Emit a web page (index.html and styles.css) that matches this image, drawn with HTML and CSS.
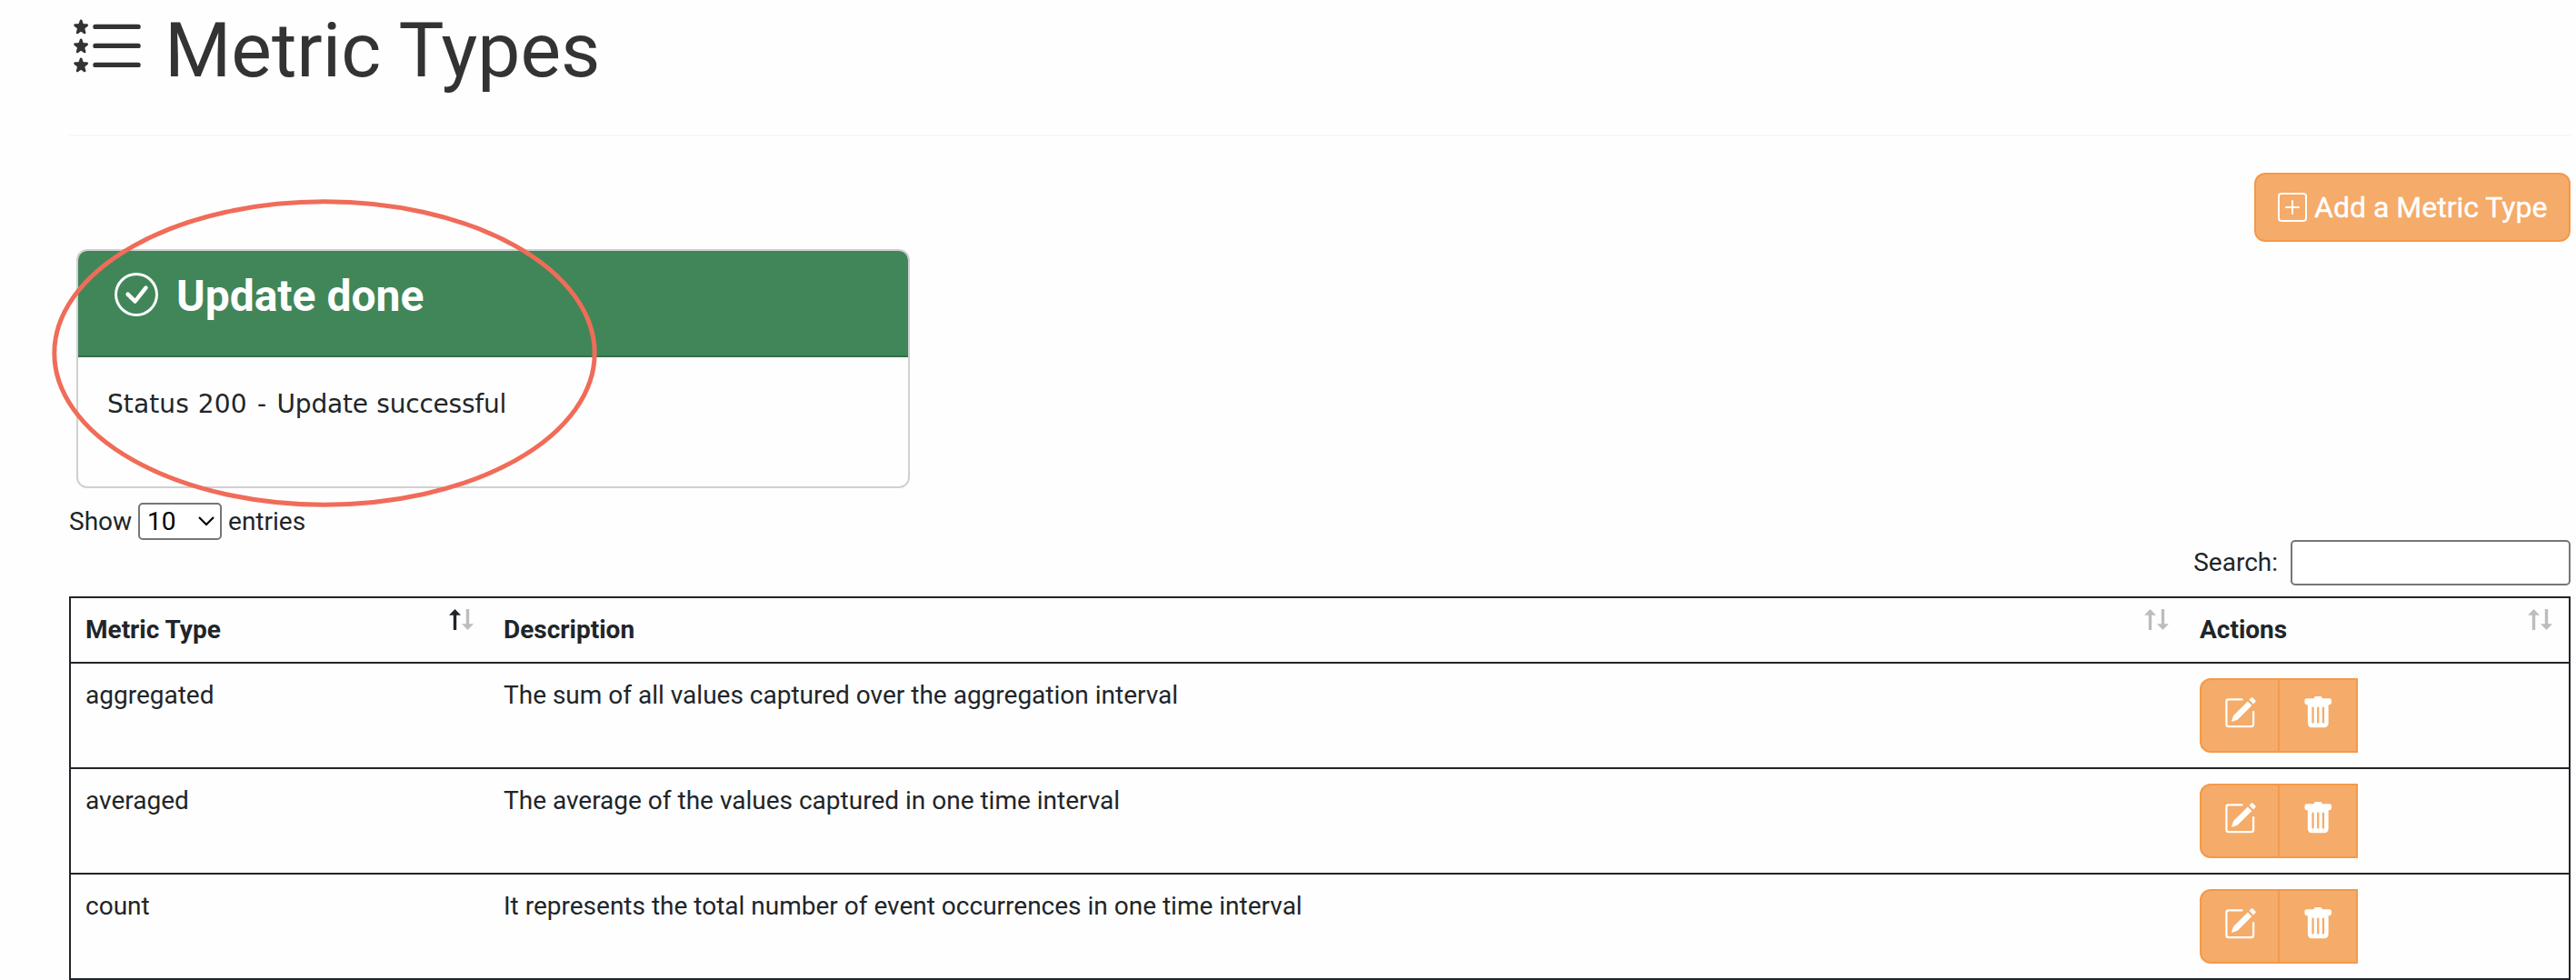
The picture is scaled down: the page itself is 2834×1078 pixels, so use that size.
FILE: index.html
```html
<!DOCTYPE html>
<html lang="en">
<head>
<meta charset="utf-8">
<title>Metric Types</title>
<link rel="stylesheet" href="styles.css">
</head>
<body>
<svg class="sprite" aria-hidden="true">
  <symbol id="edit" viewBox="0 0 16 16">
    <path d="M15.502 1.94a.5.5 0 0 1 0 .706L14.459 3.69l-2-2L13.502.646a.5.5 0 0 1 .707 0l1.293 1.293zm-1.75 2.456-2-2L4.939 9.21a.5.5 0 0 0-.121.196l-.805 2.414a.25.25 0 0 0 .316.316l2.414-.805a.5.5 0 0 0 .196-.12z"/>
    <path fill-rule="evenodd" d="M1 13.5A1.5 1.5 0 0 0 2.5 15h11a1.5 1.5 0 0 0 1.5-1.5v-6a.5.5 0 0 0-1 0v6a.5.5 0 0 1-.5.5h-11a.5.5 0 0 1-.5-.5v-11a.5.5 0 0 1 .5-.5H9a.5.5 0 0 0 0-1H2.5A1.5 1.5 0 0 0 1 2.5z"/>
  </symbol>
  <symbol id="trash" viewBox="0 0 16 16">
    <path d="M2.5 1a1 1 0 0 0-1 1v1a1 1 0 0 0 1 1H3v9a2 2 0 0 0 2 2h6a2 2 0 0 0 2-2V4h.5a1 1 0 0 0 1-1V2a1 1 0 0 0-1-1H10a1 1 0 0 0-1-1H7a1 1 0 0 0-1 1zm3 4a.5.5 0 0 1 .5.5v7a.5.5 0 0 1-1 0v-7a.5.5 0 0 1 .5-.5M8 5a.5.5 0 0 1 .5.5v7a.5.5 0 0 1-1 0v-7A.5.5 0 0 1 8 5m3 .5v7a.5.5 0 0 1-1 0v-7a.5.5 0 0 1 1 0"/>
  </symbol>
  <symbol id="star" viewBox="0 0 16 16">
    <path d="M2.242 2.194a.27.27 0 0 1 .516 0l.162.53c.035.115.14.194.258.194h.551c.259 0 .37.333.164.493l-.468.363a.28.28 0 0 0-.094.3l.173.569c.078.256-.213.462-.423.3l-.417-.324a.27.27 0 0 0-.328 0l-.417.323c-.21.163-.5-.043-.423-.299l.173-.57a.28.28 0 0 0-.094-.299l-.468-.363c-.206-.16-.095-.493.164-.493h.55a.27.27 0 0 0 .259-.194z"/>
  </symbol>
  <symbol id="sort" viewBox="0 0 27 23">
    <path class="sort-up" d="M6.5 0 13 6.7H8.2V23H4.8V6.7H0z"/>
    <path class="sort-down" d="M18.8 0H22.2V16.3H27L20.5 23 14 16.3H18.8z"/>
  </symbol>
</svg>

<main class="page">
  <header class="page-header">
    <svg class="list-icon" viewBox="0 0 16 16">
      <path d="M5 11.5a.5.5 0 0 1 .5-.5h9a.5.5 0 0 1 0 1h-9a.5.5 0 0 1-.5-.5m0-4a.5.5 0 0 1 .5-.5h9a.5.5 0 0 1 0 1h-9a.5.5 0 0 1-.5-.5m0-4a.5.5 0 0 1 .5-.5h9a.5.5 0 0 1 0 1h-9a.5.5 0 0 1-.5-.5"/>
      <use href="#star" width="16" height="16"/>
      <use href="#star" y="4" width="16" height="16"/>
      <use href="#star" y="8" width="16" height="16"/>
    </svg>
    <h1 class="title">Metric Types</h1>
  </header>

  <div class="top-row">
    <section class="card">
      <div class="card-header">
        <svg class="check-icon" viewBox="0 0 16 16">
          <path d="M8 15A7 7 0 1 1 8 1a7 7 0 0 1 0 14m0 1A8 8 0 1 0 8 0a8 8 0 0 0 0 16"/>
          <path d="M10.97 4.97l-.02.022-3.473 4.425-2.093-2.094a.75.75 0 0 0-1.06 1.06L6.97 11.03a.75.75 0 0 0 1.079-.02l3.992-4.99a.75.75 0 0 0-1.071-1.05"/>
        </svg>
        <h2 class="card-title">Update done</h2>
      </div>
      <p class="card-body">Status 200 <span class="dash">-</span> <span class="message">Update successful</span></p>
      <svg class="highlight" viewBox="0 0 600 339">
        <ellipse cx="300" cy="169.5" rx="297.2" ry="166.7"/>
      </svg>
    </section>
    <button class="add-button">
      <svg class="plus-icon" viewBox="0 0 16 16">
        <path d="M14 1a1 1 0 0 1 1 1v12a1 1 0 0 1-1 1H2a1 1 0 0 1-1-1V2a1 1 0 0 1 1-1zM2 0a2 2 0 0 0-2 2v12a2 2 0 0 0 2 2h12a2 2 0 0 0 2-2V2a2 2 0 0 0-2-2z"/>
        <path d="M8 4a.5.5 0 0 1 .5.5v3h3a.5.5 0 0 1 0 1h-3v3a.5.5 0 0 1-1 0v-3h-3a.5.5 0 0 1 0-1h3v-3A.5.5 0 0 1 8 4"/>
      </svg>
      <span>Add a Metric Type</span>
    </button>
  </div>

  <div class="length-row">
    <span>Show</span>
    <div class="length-select">
      <span>10</span>
      <svg class="chevron" viewBox="0 0 18 11"><path d="M1 1l8 8 8-8"/></svg>
    </div>
    <span>entries</span>
  </div>

  <div class="search-row">
    <label for="search">Search:</label>
    <input class="search-input" id="search" type="text">
  </div>

  <table class="metrics">
    <colgroup><col class="col-type"><col class="col-desc"><col class="col-actions"></colgroup>
    <thead>
      <tr>
        <th>Metric Type<svg class="sort ascending"><use href="#sort"/></svg></th>
        <th>Description<svg class="sort"><use href="#sort"/></svg></th>
        <th>Actions<svg class="sort"><use href="#sort"/></svg></th>
      </tr>
    </thead>
    <tbody>
      <tr>
        <td>aggregated</td>
        <td>The sum of all values captured over the aggregation interval</td>
        <td><div class="actions"><button class="action"><svg><use href="#edit"/></svg></button><button class="action"><svg><use href="#trash"/></svg></button></div></td>
      </tr>
      <tr>
        <td>averaged</td>
        <td>The average of the values captured in one time interval</td>
        <td><div class="actions"><button class="action"><svg><use href="#edit"/></svg></button><button class="action"><svg><use href="#trash"/></svg></button></div></td>
      </tr>
      <tr>
        <td>count</td>
        <td>It represents the total number of event occurrences in one time interval</td>
        <td><div class="actions"><button class="action"><svg><use href="#edit"/></svg></button><button class="action"><svg><use href="#trash"/></svg></button></div></td>
      </tr>
    </tbody>
  </table>
</main>
</body>
</html>
```
FILE: styles.css
```css
* { box-sizing: border-box; }

html, body { height: 100vh; overflow: hidden; }

body {
  margin: 0;
  background: #fefefe;
  color: #212529;
  font: 28px/42px Roboto, "Liberation Sans", sans-serif;
}

h1, h2, p { margin: 0; }

svg { display: block; fill: currentColor; flex: none; }

.sprite { position: absolute; width: 0; height: 0; }

.page { padding: 0 6px 0 76px; }

.page-header {
  display: flex;
  align-items: flex-start;
  gap: 21px;
  height: 150px;
  border-bottom: 2px solid #f7f7f8;
  color: #333;
}

.list-icon { width: 84px; height: 84px; margin-top: 10.7px; }

.title {
  margin-top: 6px;
  font-size: 84px;
  font-weight: 400;
  line-height: 100px;
}

.top-row {
  display: flex;
  justify-content: space-between;
  align-items: flex-start;
  padding: 40px 0 0 8px;
}

.card {
  position: relative;
  width: 917px;
  height: 263px;
  margin-top: 84px;
  border: 2px solid #d0d0d0;
  border-radius: 12px;
}

.card-header {
  display: flex;
  gap: 20px;
  height: 117px;
  padding: 24px 40px;
  border-bottom: 2px solid #346f4b;
  border-radius: 10px 10px 0 0;
  background: #418659;
  color: #fff;
}

.check-icon { width: 48px; height: 48px; }

.card-title { font-size: 48px; font-weight: 700; line-height: 51px; }

.card-body {
  padding: 31px 32px;
  font-family: Verdana, "DejaVu Sans", sans-serif;
  word-spacing: 1px;
  letter-spacing: 0.1px;
}

.dash { margin: 0 1.4px; }
.message { letter-spacing: -0.22px; }

.highlight {
  position: absolute;
  left: -29px;
  top: -57px;
  width: 600px;
  height: 339px;
  fill: none;
  stroke: #f06c59;
  stroke-width: 5;
}

.add-button {
  display: flex;
  align-items: center;
  gap: 8px;
  width: 348px;
  height: 76px;
  padding: 0 24px;
  border: 2px solid #f39a4a;
  border-radius: 12px;
  background: #f5ab69;
  color: #fff;
  font: 400 32px/48px Roboto, sans-serif;
  -webkit-text-stroke: 0.4px #fff;
  white-space: nowrap;
}

.plus-icon { width: 32px; height: 32px; }

.length-row {
  display: flex;
  align-items: center;
  gap: 7px;
  height: 41px;
  margin-top: 16px;
}

.length-select {
  display: flex;
  align-items: center;
  justify-content: space-between;
  width: 92px;
  height: 41px;
  padding: 0 6px 0 8px;
  border: 2px solid #767676;
  border-radius: 5px;
  background: #fff;
  color: #000;
}

.chevron { width: 18px; height: 11px; fill: none; stroke: #000; stroke-width: 2.2; }

.search-row {
  display: flex;
  justify-content: flex-end;
  align-items: center;
  gap: 14px;
  height: 50px;
}

.search-input {
  width: 308px;
  height: 50px;
  border: 2px solid #767676;
  border-radius: 5px;
  background: #fff;
}

.metrics {
  width: 2752px;
  margin-top: 12px;
  border: 2px solid #212529;
  border-collapse: separate;
  border-spacing: 0;
  table-layout: fixed;
}

.col-type { width: 459px; }
.col-desc { width: 1867px; }
.col-actions { width: 422px; }

th, td {
  position: relative;
  padding: 13.5px 16px 0;
  border-bottom: 2px solid #212529;
  text-align: left;
  vertical-align: top;
}

th { height: 72px; }
td { height: 116px; }

th:nth-child(2), td:nth-child(2) { padding-left: 17px; }

tbody tr:last-child td { height: 114px; border-bottom: 0; }

.sort {
  position: absolute;
  right: 18px;
  top: 12px;
  width: 27px;
  height: 23px;
  color: #bcbdbe;
}

.ascending { right: 16px; --up: #212529; }
.sort-up { fill: var(--up, #bcbdbe); }

.actions { display: flex; margin-top: 2.5px; }

.action {
  display: flex;
  align-items: flex-start;
  justify-content: center;
  width: 88px;
  height: 82px;
  padding: 18px 0 0;
  border: 2px solid #f39a4a;
  border-radius: 12px 0 0 12px;
  background: #f5ab69;
  color: #fff;
}

.action + .action { margin-left: -2px; border-radius: 0; }

.action svg { width: 36.5px; height: 36.5px; }
```
